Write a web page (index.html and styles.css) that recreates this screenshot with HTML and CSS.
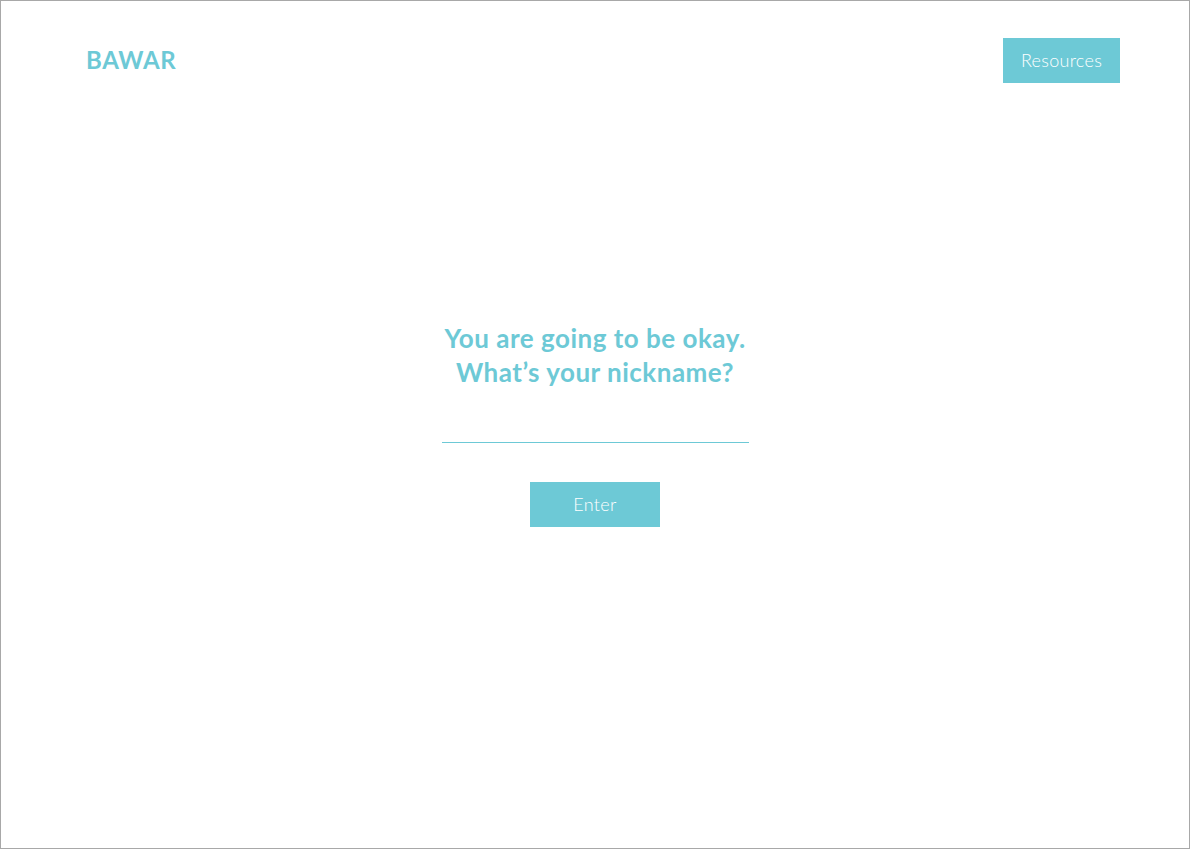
FILE: index.html
```html
<!DOCTYPE html>
<html>
<head>
<meta charset="utf-8">
<link rel="stylesheet" href="styles.css">
</head>
<body>
<div class="frame">
  <header class="topbar">
    <div class="logo">BAWAR</div>
    <button class="btn btn-resources">Resources</button>
  </header>
  <main class="center">
    <h1 class="question">You are going to be okay.<br>What’s your nickname?</h1>
    <input class="nick" type="text" aria-label="Nickname">
    <button class="btn btn-enter">Enter</button>
  </main>
</div>
</body>
</html>
```
FILE: styles.css
```css
* { box-sizing: border-box; }
html, body { margin: 0; padding: 0; background: #fff; }
body { font-family: Lato, "Open Sans", sans-serif; }
.frame {
  width: 1190px;
  height: 849px;
  border: 1px solid #a8a8a8;
  background: #fff;
}
.topbar {
  display: flex;
  justify-content: space-between;
  align-items: center;
  padding: 37px 69px 0 85px;
}
.logo {
  color: #6dc9d6;
  font-size: 24px;
  font-weight: 700;
  letter-spacing: 0.6px;
  margin-top: -2px;
}
.btn {
  background: #6dc9d6;
  color: #fff;
  border: none;
  font-family: Lato, "Open Sans", sans-serif;
  font-weight: 300;
  font-size: 18px;
  letter-spacing: 0.3px;
  height: 45px;
  padding: 0 0 2px;
  cursor: pointer;
}
.btn-resources { width: 117px; }
.center {
  display: flex;
  flex-direction: column;
  align-items: center;
}
.question {
  margin: 238px 0 0;
  color: #6dc9d6;
  font-size: 26px;
  font-weight: 700;
  line-height: 34px;
  text-align: center;
  letter-spacing: 0.5px;
}
.nick {
  -webkit-appearance: none;
  appearance: none;
  margin-top: 21px;
  width: 307px;
  height: 33px;
  border: 0;
  border-bottom: 1px solid #6dc9d6;
  border-radius: 0;
  outline: none;
  background: transparent;
  font-family: inherit;
  font-size: 18px;
  color: #6dc9d6;
  text-align: center;
  padding: 0;
}
.btn-enter {
  margin-top: 39px;
  width: 130px;
}
```
